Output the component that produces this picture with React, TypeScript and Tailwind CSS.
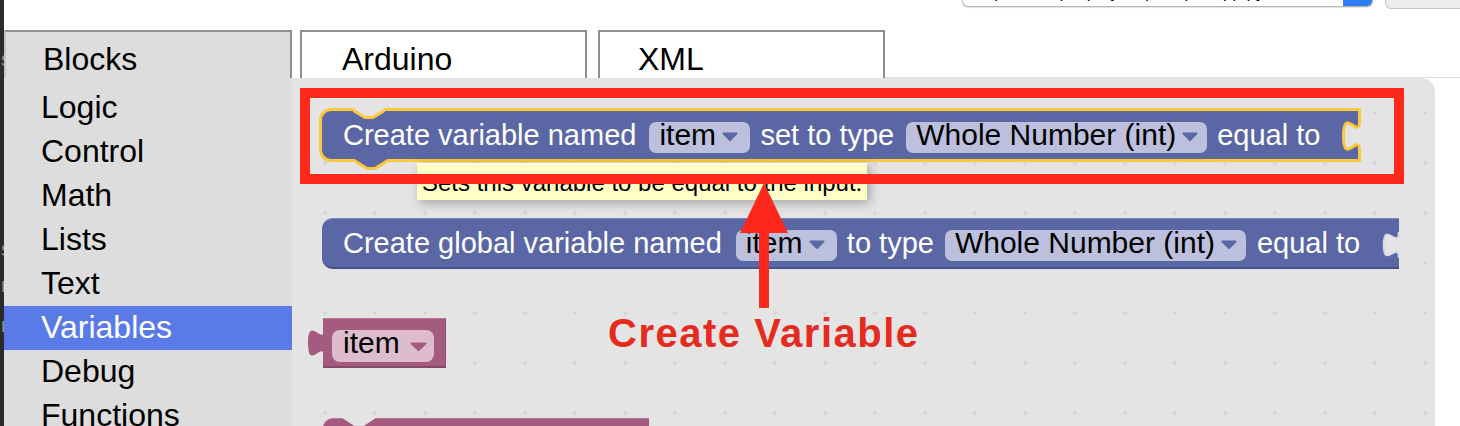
import React from "react";

function Tri({ color }: { color: string }) {
  return (
    <svg width="16" height="9" viewBox="0 0 16 9" className="ml-[6px] mt-[10px] shrink-0">
      <path d="M1.5,1.5 L14.5,1.5 L8,8 Z" fill={color} stroke={color} strokeWidth="2" strokeLinejoin="round" />
    </svg>
  );
}

function Label({ children, className = "" }: { children: React.ReactNode; className?: string }) {
  return (
    <span className={`shrink-0 whitespace-nowrap text-[29px] leading-[26px] text-white ${className}`}>{children}</span>
  );
}

function BlueField({ text, className }: { text: string; className: string }) {
  return (
    <div className={`flex h-[31px] shrink-0 items-start rounded-[7px] bg-[#bcc0dc] pl-[10px] ${className}`}>
      <span className="whitespace-nowrap text-[30px] leading-[25px] text-black">{text}</span>
      <Tri color="#5b67a5" />
    </div>
  );
}

function Grid() {
  return (
    <svg className="absolute inset-0" width="1143" height="348">
      <defs>
        <pattern id="ws-grid" x="8" y="10" width="50" height="50" patternUnits="userSpaceOnUse">
          <path d="M22.5,25 h5 M25,22.5 v5" stroke="#cdcdcd" strokeWidth="1" />
        </pattern>
      </defs>
      <rect width="1143" height="348" fill="url(#ws-grid)" />
    </svg>
  );
}

export default function App() {
  const sidebar = ["Logic", "Control", "Math", "Lists", "Text", "Variables", "Debug", "Functions"];
  return (
    <div className="flex h-[426px] w-[1460px] overflow-hidden bg-white font-['Liberation_Sans',Arial,sans-serif]">
      {/* dark editor strip */}
      <div className="flex h-full w-[4px] shrink-0 flex-col items-end overflow-hidden bg-[#2b2b2b] text-[20px] leading-[22px] text-[#8f8f8f]">
        <div className="mt-[48px] h-[22px] shrink-0 -mr-[7px]">s</div>
        <div className="mt-[168px] h-[22px] shrink-0 -mr-[7px]">s</div>
        <div className="mt-[14px] h-[22px] shrink-0 -mr-[8px]">n</div>
        <div className="mt-[18px] h-[22px] shrink-0 -mr-[8px]">n</div>
      </div>

      <div className="flex min-w-0 flex-1 flex-col">
        {/* top bar */}
        <div className="flex h-[30px] shrink-0 items-start pl-[958px]">
          <div className="flex h-[7px] w-[411px] shrink-0 overflow-hidden rounded-b-[6px] border border-t-0 border-[#b5b5b5] bg-white shadow-[0_1px_1px_rgba(0,0,0,0.12)]">
            <div className="flex-1 overflow-hidden pl-[18px]">
              <div className="-mt-[17px] whitespace-nowrap text-[17px] leading-[20px] text-black">
                Open sample project (Blink) in app.py
              </div>
            </div>
            <div className="w-[29px] shrink-0 bg-[#2f7ef6]" />
          </div>
          <div className="ml-[12px] h-[9px] w-[90px] shrink-0 rounded-b-[6px] border border-t-0 border-[#c6c6c6] bg-[#eeeeee]" />
        </div>

        {/* tabs */}
        <div className="flex h-[48px] shrink-0 items-stretch">
          <div className="w-[288px] shrink-0 border-l-2 border-r-2 border-t-2 border-[#8d8d8d] border-l-[#c4c4c4] bg-[#dddddd] pl-[37px] pt-[10px] text-[32px] leading-[34px] text-black">
            Blocks
          </div>
          <div className="ml-[8px] w-[287px] shrink-0 border-l-2 border-r-2 border-t-2 border-[#8d8d8d] bg-white pl-[40px] pt-[10px] text-[32px] leading-[34px] text-black">
            Arduino
          </div>
          <div className="ml-[11px] w-[287px] shrink-0 border-l-2 border-r-2 border-t-2 border-[#8d8d8d] bg-white pl-[38px] pt-[10px] text-[32px] leading-[34px] text-black">
            XML
          </div>
          <div className="flex-1 border-b border-[#dcdcdc]" />
        </div>

        {/* body */}
        <div className="flex min-h-0 flex-1">
          <div className="w-[288px] shrink-0 bg-[#dddddd] pt-[8px]">
            {sidebar.map((s) =>
              s === "Variables" ? (
                <div key={s} className="h-[44px] bg-[#5a7be7] pl-[37px] text-[32px] leading-[42px] text-white">
                  {s}
                </div>
              ) : (
                <div key={s} className="h-[44px] pl-[37px] text-[32px] leading-[42px] text-black">
                  {s}
                </div>
              )
            )}
          </div>

          {/* workspace */}
          <div className="relative h-[348px] w-[1143px] shrink-0 overflow-hidden rounded-tr-[14px] bg-[#e4e4e4]">
            <Grid />

            <div className="relative flex flex-col items-start pt-[30px]">
              {/* Block 1 (selected) */}
              <div className="relative ml-[27px] flex h-[54px] w-[1042px] shrink-0 items-start rounded-l-[12px] border-[3px] border-[#fcc93d] bg-[#5b67a5] pl-[21px] pt-[11px]">
                <Label>Create variable named</Label>
                <BlueField text="item" className="ml-[13px] w-[101px]" />
                <Label className="ml-[10px]">set to type</Label>
                <BlueField text="Whole Number (int)" className="ml-[12px] w-[301px]" />
                <Label className="ml-[10px]">equal to</Label>
                {/* top notch */}
                <svg className="absolute left-[31px] top-[-3px]" width="32" height="12" viewBox="0 0 32 12">
                  <path d="M0,0 L0,1.5 L12,9.5 L20,9.5 L32,1.5 L32,0 Z" fill="#e4e4e4" />
                  <path d="M-1,1.5 L12,9.5 L20,9.5 L33,1.5" fill="none" stroke="#fcc93d" strokeWidth="3" strokeLinejoin="round" />
                </svg>
                {/* bottom tab */}
                <svg className="absolute left-[33px] top-full" width="32" height="12" viewBox="0 0 32 12">
                  <path d="M0,0 L32,0 L32,1.5 L20,9.5 L12,9.5 L0,1.5 Z" fill="#5b67a5" />
                  <path d="M-1,1.5 L12,9.5 L20,9.5 L33,1.5" fill="none" stroke="#fcc93d" strokeWidth="3" strokeLinejoin="round" />
                </svg>
                {/* right input notch */}
                <svg className="absolute right-[-3px] top-[7px]" width="24" height="36" viewBox="0 0 24 36">
                  <path d="M22.5,0 v3 c0,20 -16,-16 -16,15 s16,-5 16,15 v3 H26 V0 Z" fill="#e4e4e4" />
                  <path d="M22.5,-1 v4 c0,20 -16,-16 -16,15 s16,-5 16,15 v4" fill="none" stroke="#fcc93d" strokeWidth="3" />
                </svg>
              </div>

              {/* Block 2 */}
              <div className="relative ml-[30px] mt-[56px] flex h-[51px] w-[1077px] shrink-0 items-start rounded-l-[11px] border-b-2 border-t border-b-[#48528a] border-t-[#7d87ba] bg-[#5b67a5] pl-[21px] pt-[11px]">
                <Label>Create global variable named</Label>
                <BlueField text="item" className="ml-[14px] w-[101px]" />
                <Label className="ml-[10px]">to type</Label>
                <BlueField text="Whole Number (int)" className="ml-[11px] w-[301px]" />
                <Label className="ml-[11px]">equal to</Label>
                <svg className="absolute right-0 top-[13px]" width="18" height="26" viewBox="0 0 18 26">
                  <path d="M18,0 v1 c0,16 -15,-13 -15,12 s15,-4 15,12 v1 H20 V0 Z" fill="#e4e4e4" />
                  <path d="M17.5,0 v1 c0,16 -15,-13 -15,12 s15,-4 15,12 v1" fill="none" stroke="#d6d8e8" strokeWidth="1.5" />
                </svg>
              </div>

              {/* Pink variable getter */}
              <div className="relative ml-[31px] mt-[49px] flex h-[50px] w-[123px] shrink-0 items-start border-b-2 border-r border-t border-b-[#84486a] border-r-[#8d4e6f] border-t-[#b67895] bg-[#a55b80] pl-[9px] pt-[11px]">
                <div className="flex h-[32px] w-[102px] shrink-0 items-start rounded-[8px] bg-[#dcbccd] pl-[11px]">
                  <span className="whitespace-nowrap text-[30px] leading-[25px] text-black">item</span>
                  <svg width="17" height="9" viewBox="0 0 17 9" className="ml-[10px] mt-[12px] shrink-0">
                    <path d="M1.5,1.5 L15.5,1.5 L8.5,8 Z" fill="#a55b80" stroke="#a55b80" strokeWidth="2" strokeLinejoin="round" />
                  </svg>
                </div>
                <svg className="absolute left-[-17px] top-[10px]" width="18" height="28" viewBox="0 0 18 28">
                  <path d="M18,0 c0,18 -16,-15 -16,14 s16,-4 16,14 Z" fill="#a55b80" />
                </svg>
              </div>

              {/* Pink setter (cut off) */}
              <div className="relative ml-[31px] mt-[50px] h-[30px] w-[326px] shrink-0 rounded-tl-[10px] border-t border-t-[#b67895] bg-[#a55b80]">
                <svg className="absolute left-[20px] top-[-1px]" width="32" height="10" viewBox="0 0 32 10">
                  <path d="M0,0 L0,0.5 L12,8.5 L20,8.5 L32,0.5 L32,0 Z" fill="#e4e4e4" />
                </svg>
              </div>
            </div>

            {/* tooltip */}
            <div className="absolute left-[125px] top-[85px] h-[37px] w-[450px] overflow-hidden bg-[#ffffc7] pl-[5px] pt-[2px] text-[24px] leading-[35px] text-black shadow-[3px_3px_10px_rgba(0,0,0,0.28)]">
              Sets this variable to be equal to the input.
            </div>

            {/* red highlight box */}
            <div className="absolute left-[8px] top-[10px] h-[96px] w-[1104px] border-[10px] border-[#fc291c]" />

            {/* arrow */}
            <svg className="absolute left-[445px] top-[103px]" width="54" height="130" viewBox="0 0 54 130">
              <path d="M27,2 L51,52 L3,52 Z" fill="#fc291c" />
              <rect x="22" y="50" width="10" height="77" fill="#fc291c" />
            </svg>

            {/* annotation */}
            <div className="absolute left-[316px] top-[235px] whitespace-nowrap text-[40px] font-bold leading-[40px] tracking-[1.5px] text-[#e42b1e]">
              Create Variable
            </div>
          </div>

          <div className="flex-1 bg-white" />
        </div>
      </div>
    </div>
  );
}
